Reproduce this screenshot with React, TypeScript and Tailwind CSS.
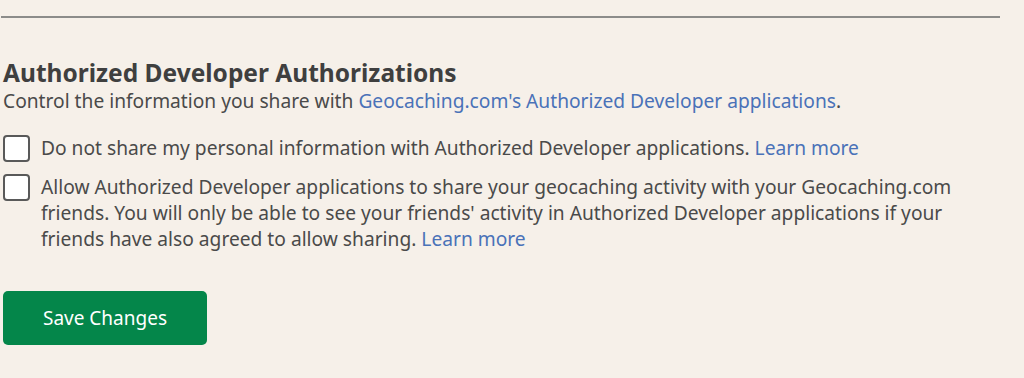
export default function App() {
  return (
    <div className="min-h-[378px] w-[1024px] bg-[#f6f0e9] text-[#4a4a4a]" style={{ fontFamily: '"Noto Sans", "Open Sans", sans-serif' }}>
      <div className="pt-4">
        <hr className="ml-px w-[999px] border-0 border-t-2 border-[#8c8c8a]" />
      </div>
      <div className="pl-[3px] pt-[40px]">
        <h2 className="text-[24.5px] font-bold leading-[30px] text-[#3f3f3f]">Authorized Developer Authorizations</h2>
        <p className="text-[19.2px] leading-[26px]">
          Control the information you share with{" "}
          <a href="#" className="text-[#4a72b8]">Geocaching.com's Authorized Developer applications</a>.
        </p>
        <div className="mt-[21px] flex flex-col gap-[12px]">
          <label className="flex items-start gap-[11px]">
            <span className="h-[27px] w-[27px] shrink-0 rounded-[4px] border-2 border-[#595959] bg-white" />
            <span className="text-[19.2px] leading-[26px]">
              Do not share my personal information with Authorized Developer applications.{" "}
              <a href="#" className="text-[#4a72b8]">Learn more</a>
            </span>
          </label>
          <label className="flex items-start gap-[11px]">
            <span className="h-[27px] w-[27px] shrink-0 rounded-[4px] border-2 border-[#595959] bg-white" />
            <span className="max-w-[920px] text-[19.2px] leading-[26px]">
              Allow Authorized Developer applications to share your geocaching activity with your Geocaching.com friends. You will only be able to see your friends' activity in Authorized Developer applications if your friends have also agreed to allow sharing.{" "}
              <a href="#" className="text-[#4a72b8]">Learn more</a>
            </span>
          </label>
        </div>
        <button className="mt-[39px] h-[54px] w-[204px] rounded-[5px] bg-[#04864a] text-[19px] text-white">Save Changes</button>
      </div>
    </div>
  );
}
